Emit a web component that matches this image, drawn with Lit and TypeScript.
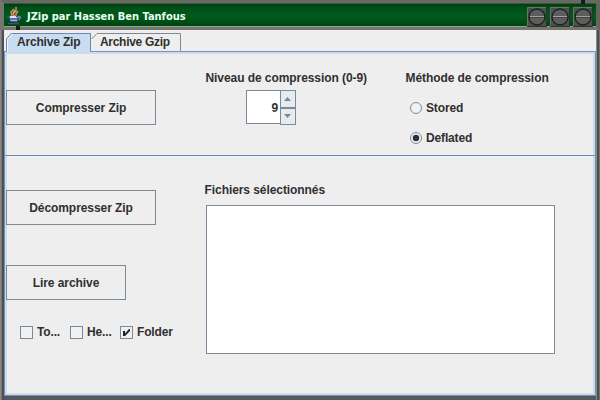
import { LitElement, html, svg, css } from "lit";
import { customElement } from "lit/decorators.js";

@customElement("screw-button")
class ScrewButton extends LitElement {
  static styles = css`
    :host { display: block; width: 20px; height: 20px; }
    svg { display: block; }
  `;
  render() {
    return html`<svg width="20" height="20" viewBox="0 0 20 20">
      <rect width="20" height="20" fill="#4a504b" />
      <path d="M.5 20V.5H20" fill="none" stroke="#68736b" />
      <path d="M0 19.5H19.5V0" fill="none" stroke="#29332b" />
      <circle cx="10" cy="10" r="8" fill="#5c5e5d" stroke="#1b1f1c" stroke-width="1.3" />
      <path d="M3 9.5H17" stroke="#a79d9b" />
      <path d="M3 10.5H17" stroke="#414342" />
    </svg>`;
  }
}

@customElement("choice-item")
class ChoiceItem extends LitElement {
  static properties = { kind: {}, label: {}, checked: { type: Boolean } };
  declare kind: string;
  declare label: string;
  declare checked: boolean;
  static styles = css`
    :host { display: flex; align-items: center; height: 14px; white-space: nowrap; }
    svg { display: block; flex: none; }
    .label { margin-left: 4px; line-height: 14px; letter-spacing: -.15px; }
  `;
  render() {
    const radio = this.kind === "radio";
    const mark = radio
      ? svg`<circle cx="6" cy="6" r="5.5" fill="#f1f3f5" stroke="#7a8a99"/>${this.checked ? svg`<circle cx="6" cy="6" r="3.2" fill="#303336"/>` : ""}`
      : svg`<rect x=".5" y=".5" width="12" height="12" fill="#f0f1f2" stroke="#7a8a99"/>${this.checked ? svg`<path d="M3 5H5V7.5L9 3H10V5L5 10H3Z" fill="#202326"/>` : ""}`;
    return html`<svg width=${radio ? 12 : 13} height=${radio ? 12 : 13}>${mark}</svg>
      <span class="label">${this.label}</span>`;
  }
}

@customElement("app-root")
class AppRoot extends LitElement {
  static styles = css`
    :host {
      display: block; width: 600px; height: 400px; overflow: hidden;
      font: bold 12px/14px "Liberation Sans", Arial, sans-serif; color: #303030; letter-spacing: -.07px;
    }
    * { box-sizing: border-box; }
    .window {
      width: 600px; height: 400px; display: flex; flex-direction: column; position: relative; padding: 0 4px 4px;
      background: linear-gradient(90deg, #8b8883 0 1px, #77777a 1px 2px, #4b4f54 2px 4px, #55595d 4px 596px, #858b92 596px 597px, #4a4f52 597px 599px, #737372 599px);
    }
    .title {
      height: 30px; margin: 0 -4px; flex: none; display: flex; align-items: center;
      border: solid; border-width: 3px 4px; border-color: #6a6862 #65645f #77756f #77756f;
      background: linear-gradient(#00390d, #004f18 20%, #005b1d 55%, #00400f); padding: 1px 0 0 3px;
      box-shadow: inset 0 1px #315d3b, inset 0 -1px #89a78e;
    }
    .name { font: bold 11px/14px "DejaVu Sans Condensed", "DejaVu Sans", sans-serif; font-stretch: condensed; letter-spacing: 0; color: #e7fff0; margin: 3px 0 0 4px; white-space: nowrap; }
    .controls { margin-left: auto; display: flex; gap: 3px; margin-right: 3px; margin-top: 2px; }
    .body { flex: 1; background: #eee; display: flex; flex-direction: column; padding-top: 3px; min-height: 0; }
    .tabs { height: 18px; display: flex; padding-left: 2px; flex: none; }
    .tab { height: 18px; position: relative; line-height: 19px; white-space: nowrap; }
    .tab svg { position: absolute; left: 0; top: 0; }
    .tab span { position: relative; }
    .first { width: 85px; padding-left: 11px; z-index: 1; }
    .second { width: 92px; padding-left: 9px; }
    .panel {
      flex: 1; border: 1px solid #7a8fae; border-top-color: #7893bb; display: flex; flex-direction: column;
      min-height: 0; box-shadow: inset 0 0 0 2px #cbdcea;
    }
    .row { display: grid; grid-template-columns: 200px 200px 1fr; padding-left: 1px; }
    .top { height: 104px; border-bottom: 1px solid #6c88b7; flex: none; }
    .button { height: 35px; width: 150px; border: 1px solid #7a8a99; background: #eee; text-align: center; line-height: 34px; }
    .top .button { margin-top: 38px; }
    .heading { line-height: 14px; white-space: nowrap; }
    .level { padding-top: 19px; margin-left: -.5px; }
    .spinner { margin: 5px 0 0 40.5px; width: 50px; height: 35px; display: flex; }
    .value { width: 34px; height: 34px; background: white; border: 1px solid #7a8a99; border-right: 0; text-align: right; line-height: 34px; padding-right: 2px; }
    .method { padding-top: 19px; margin-left: -.5px; display: flex; flex-direction: column; }
    .stored, .deflated { margin: 16px 0 0 4.5px; }
    .bottom { grid-template-columns: 198px 1fr; flex: 1; }
    .actions { padding-top: 34px; }
    .read { width: 120px; margin-top: 40px; }
    .checks { display: grid; grid-template-columns: 50px 50px 60px; margin: 25px 0 0 14px; }
    .files { padding: 27px 0 0 1px; }
    .files .heading { margin-left: -.5px; }
    .list { width: 349px; height: 149px; border: 1px solid #7a8a99; background: #fff; margin: 8px 0 0 1px; }
    .w-az { letter-spacing: -.18px; } .w-ag { letter-spacing: -.3px; }
    .nub { position: absolute; width: 4px; height: 4px; background: #171b17; }
    .nub-left { left: 16px; top: 26px; }
    .nub-right { left: 581px; top: 0; }
  `;
  render() {
    return html`<div class="window">
      <div class="title">
        <svg width="16" height="18" viewBox="0 0 16 18">
          <path d="M7 2L4 5L5 9M9 0V4L6 7L8 10M11 4L9 7V9" fill="none" stroke="#e68a62" stroke-width="1.4"/>
          <path d="M8 3L6 6" stroke="#f4d0b0"/>
          <path d="M2 9H11L10 15H4Z" fill="#dbe2f0"/>
          <path d="M0 9.5H3M9 9.5H14M2 12H11M4 14.5H10M1 16.5H12" stroke="#394f91" stroke-width="1.3"/>
          <path d="M11 10Q15 9 12 13" fill="none" stroke="#aeb9dd"/>
        </svg>
        <span class="name">JZip par Hassen Ben Tanfous</span>
        <div class="controls"><screw-button></screw-button><screw-button></screw-button><screw-button></screw-button></div>
      </div>
      <div class="body">
        <div class="tabs">
          <div class="tab first"><svg width="85" height="20"><path d="M.5 18V6L6 -.5H84.5V18" fill="#c8ddf2" stroke="#7187ad"/><path d="M1 18H84V20H1Z" fill="#c8ddf2"/><path d="M1.5 19V6.5L7 .5H83" fill="none" stroke="#eef5fd"/><path d="M6 .5H84" stroke="#7187ad"/></svg><span class="w-az">Archive Zip</span></div>
          <div class="tab second"><svg width="92" height="18"><path d="M.5 6L6 .5H89.5V18" fill="#eee" stroke="#7a8a99"/></svg><span class="w-ag">Archive Gzip</span></div>
        </div>
        <div class="panel">
          <div class="row top">
            <div class="button">Compresser Zip</div>
            <div class="level">
              <div class="heading">Niveau de compression (0-9)</div>
              <div class="spinner"><div class="value">9</div>
                <svg width="16" height="35"><rect x=".5" y=".5" width="15" height="17" fill="#e6ebf0" stroke="#7a8a99"/><rect x=".5" y="18.5" width="15" height="16" fill="#e6ebf0" stroke="#7a8a99"/><path d="M4 11L7.5 7L11 11ZM4 24H11L7.5 28Z" fill="#7b8793"/></svg>
              </div>
            </div>
            <div class="method">
              <div class="heading">Méthode de compression</div>
              <choice-item class="stored" kind="radio" label="Stored"></choice-item>
              <choice-item class="deflated" kind="radio" label="Deflated" checked></choice-item>
            </div>
          </div>
          <div class="row bottom">
            <div class="actions">
              <div class="button">Décompresser Zip</div>
              <div class="button read">Lire archive</div>
              <div class="checks">
                <choice-item label="To..."></choice-item><choice-item label="He..."></choice-item><choice-item label="Folder" checked></choice-item>
              </div>
            </div>
            <div class="files"><div class="heading">Fichiers sélectionnés</div><div class="list"></div></div>
          </div>
        </div>
      </div>
      <i class="nub nub-left"></i><i class="nub nub-right"></i>
    </div>`;
  }
}
